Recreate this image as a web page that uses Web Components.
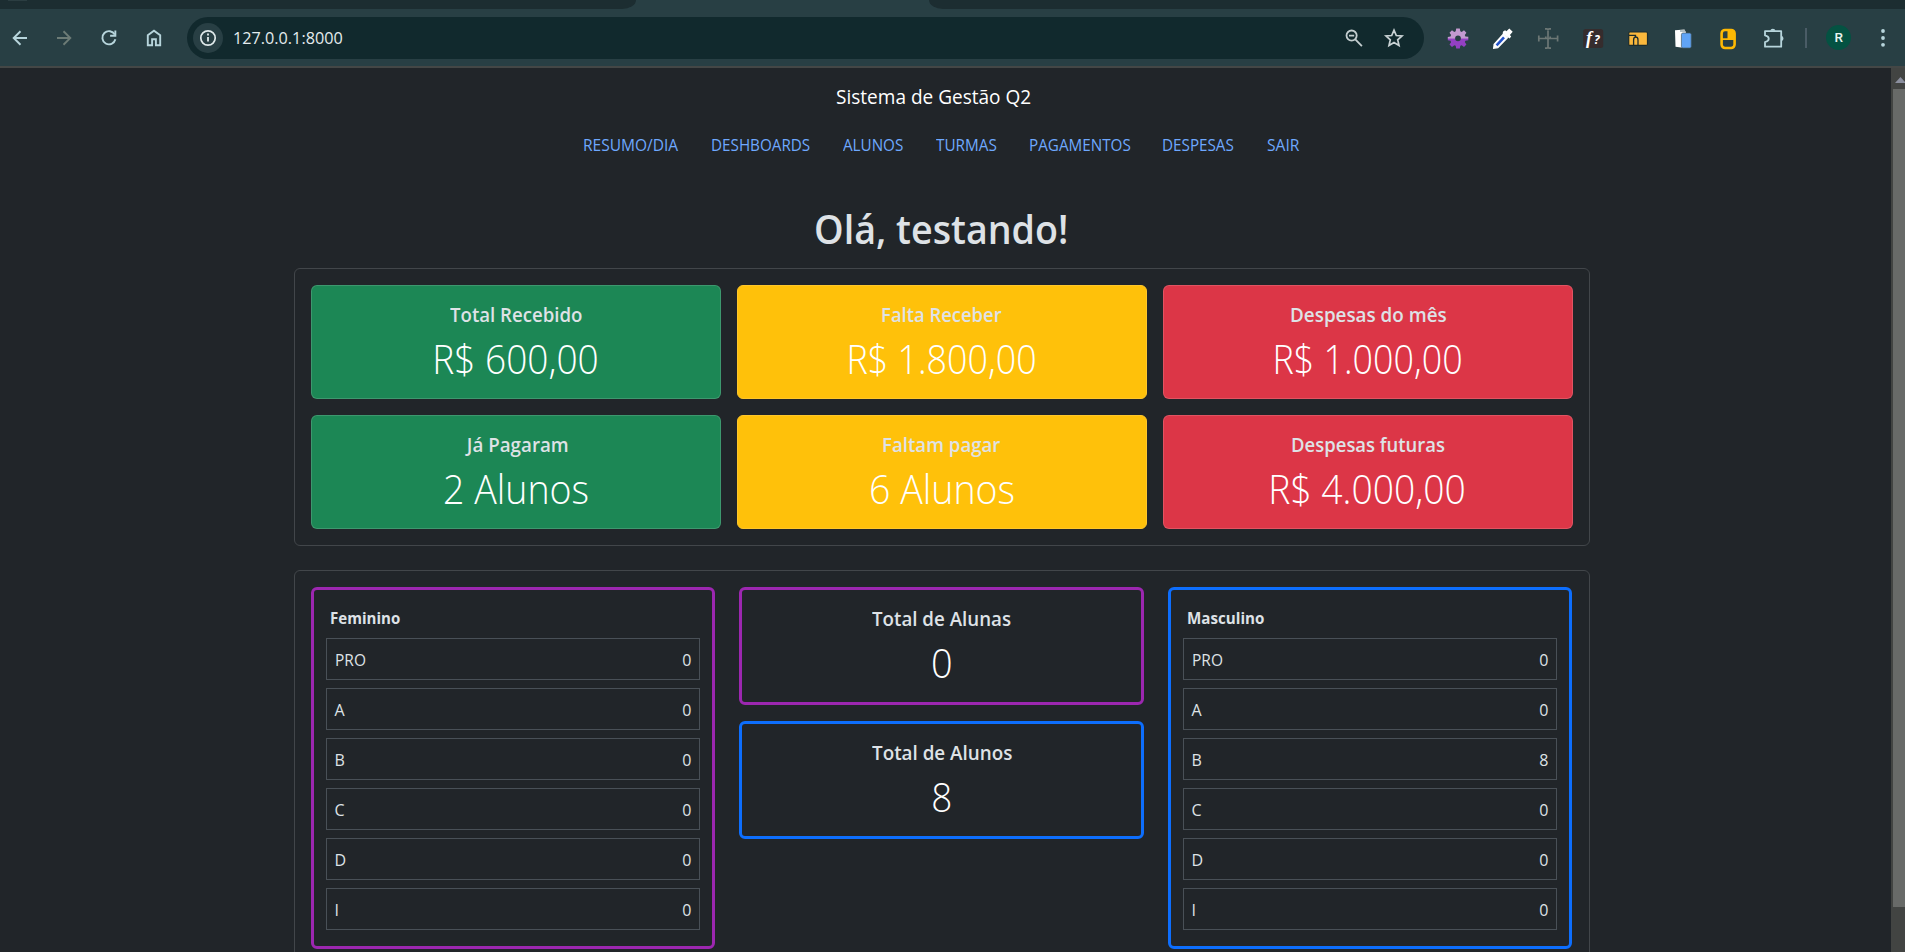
<!DOCTYPE html>
<html lang="pt-BR">
<head>
<meta charset="utf-8">
<title>Sistema de Gestão Q2</title>
<style>
html,body{margin:0;height:100%;overflow:hidden;background:#212529}
body{font-family:"Open Sans","Noto Sans",sans-serif;font-size:16px;line-height:24px;color:#dee2e6}
</style>
</head>
<body>
<app-window></app-window>
<script>
const define = (name, html, setup) => customElements.define(name, class extends HTMLElement {
  connectedCallback() {
    if (this.shadowRoot) return;
    const root = this.attachShadow({mode: 'open'});
    root.innerHTML = typeof html === 'function' ? html(this) : html;
    if (setup) setup(this, root);
  }
});

/* A line of text whose visible glyphs span exactly `w` pixels. */
define('fit-text', el => `<style>
:host{display:inline-block;white-space:nowrap;width:${el.getAttribute('w')}px;vertical-align:top;text-align:left}
span{display:inline-block;transform-origin:0 50%}
</style><span><slot></slot></span>`, (el, root) => {
  const cs = getComputedStyle(el);
  const ctx = document.createElement('canvas').getContext('2d');
  ctx.font = `${cs.fontWeight} ${cs.fontSize} ${cs.fontFamily}`;
  const m = ctx.measureText(el.textContent);
  const ink = m.actualBoundingBoxLeft + m.actualBoundingBoxRight;
  const s = el.getAttribute('w') / ink;
  root.querySelector('span').style.transform = `translateX(${m.actualBoundingBoxLeft * s}px) scaleX(${s})`;
});

define('tab-strip', `<style>
:host{display:flex;justify-content:space-between;height:9px;background:#283f44}
i{display:block;height:9px;background:#1c2d31}
.l{width:636px;border-bottom-right-radius:14px 9px}
.l b{display:block;width:19px;height:1px;margin-left:8px;background:#2b3d41}
.r{width:976px;border-bottom-left-radius:14px 9px}
</style><i class="l"><b></b></i><i class="r"></i>`);

const icons = {
  back: `<path d="M22 15H9M15.5 8.3 8.7 15l6.8 6.7" fill="none" stroke="#b7d5dc" stroke-width="1.9"/>`,
  forward: `<path d="M8 15h13M14.5 8.3 21.3 15l-6.8 6.7" fill="none" stroke="#6c7b76" stroke-width="1.9"/>`,
  reload: `<path d="M20.8 11.6A6.6 6.6 0 1 0 21.4 16.3" fill="none" stroke="#b7d5dc" stroke-width="1.9"/><path d="M22.3 7.5v6.2h-6.2v-1.9h4.3V7.5z" fill="#b7d5dc"/>`,
  home: `<path d="M8.8 22.2V12.3L15 7.7l6.2 4.6v9.9h-4.3v-6h-3.8v6z" fill="none" stroke="#b7d5dc" stroke-width="1.9"/>`,
  info: `<circle cx="15" cy="15" r="7.2" fill="none" stroke="#dfe9ea" stroke-width="1.7"/><path d="M15 14v4.4M15 10.6v1.9" stroke="#dfe9ea" stroke-width="1.8"/>`,
  zoom: `<g fill="none" stroke="#c3cdcf" stroke-width="1.8"><circle cx="12.6" cy="12.6" r="5.1"/><path d="m16.3 16.3 6.6 6.9M10 12.6h5.2"/></g>`,
  star: `<path d="m15 7.2 2.3 5.3 5.7.5-4.3 3.8 1.3 5.6-5-3-5 3 1.3-5.6L7 13l5.7-.5z" fill="none" stroke="#c9d2d4" stroke-width="1.7"/>`,
  gear: `<defs><linearGradient id="g" x2="0" y2="1"><stop offset=".48" stop-color="#c49ad0"/><stop offset=".52" stop-color="#9440c4"/></linearGradient></defs><path fill="url(#g)" fill-rule="evenodd" d="M13.2 5.5h3.6l.5 2.8 1.4.6 2.3-1.7 2.4 2.5-1.6 2.3.6 1.4 2.9.4v3.4l-2.9.5-.6 1.4 1.6 2.4-2.4 2.4-2.3-1.6-1.4.5-.5 2.8h-3.6l-.5-2.8-1.4-.5L9 24l-2.5-2.4 1.6-2.4-.6-1.4-2.7-.5v-3.4l2.7-.4.6-1.4-1.6-2.3L9 7.2l2.3 1.7 1.4-.6zM15 12.4a2.9 2.9 0 1 0 0 5.8 2.9 2.9 0 0 0 0-5.8z"/>`,
  dropper: `<path d="m5.7 25.2.5-4L15.5 11l3.9 3.8L9.8 24.6z" fill="#fff" stroke="#fff" stroke-width="1.3"/><path d="M8.6 22.3 16 14.3" stroke="#2453c9" stroke-width="2.6"/><path d="m15.1 8.6 2-1.4 1.3 1.1 2.9-2.7 3.4 3.2-2.8 3.2 1.3 1.5-1.6 1.9-7-5z" fill="#fff"/>`,
  cross: `<path d="M15 6v19M5.8 15.5h18.8M12 5.8h2l1 1 1-1h2M12 25.2h2l1-1 1 1h2M5.8 12.6v5.8M24.6 12.6v5.8M12.8 15.5v-2M17.2 15.5v-2" fill="none" stroke="#6c7775" stroke-width="1.7"/>`,
  font: `<rect x="5.2" y="6" width="20" height="19" rx="2.5" fill="#352c2d"/><text x="8" y="20.5" font-family="Liberation Serif,serif" font-style="italic" font-weight="700" font-size="18" fill="#fff">f</text><text x="16" y="20.5" font-family="Open Sans,sans-serif" font-style="italic" font-weight="700" font-size="12" fill="#fff">?</text>`,
  folder: `<rect x="5.7" y="9" width="18.8" height="13.4" rx="1.2" fill="#fbb83c" stroke="#1c2c2e" stroke-width="1.2"/><path d="M6 12.4h6.5v1.8M10.6 22.2V17q0-3 2.2-3t2.2 3v5.2" fill="none" stroke="#1c2c2e" stroke-width="1.3"/>`,
  pages: `<path d="M7 7.2 16.5 6.5l1.5 3-3 15.2-7.5-1z" fill="#fff"/><path d="M12 8h5" stroke="#657d84"/><rect x="13.4" y="10" width="9.8" height="15" rx="1.6" fill="#60a4f6" stroke="#445c68" stroke-width=".7"/>`,
  mouse: `<rect x="8.6" y="7" width="13" height="18" rx="3.4" fill="#283f44" stroke="#fdb803" stroke-width="2.6"/><path d="M14.5 7v8.3H8.6V17h13V8l-2-1.4z" fill="#fdb803"/>`,
  puzzle: `<path d="M7 8.2h16.2v15.5H7V19c5-1.3 5-5.4 0-6.6z" fill="none" stroke="#b7d5dc" stroke-width="1.8" stroke-linejoin="round"/><path d="M12.2 7.7a2.7 2.5 0 0 1 5.3 0zM23.5 12.7a2.7 2.8 0 0 1 0 5.4z" fill="#b7d5dc"/>`,
  dots: `<g fill="#b7d5dc"><circle cx="15" cy="8" r="1.9"/><circle cx="15" cy="15" r="1.9"/><circle cx="15" cy="21.8" r="1.9"/></g>`
};
define('ui-icon', el => `<style>
:host{display:flex;justify-content:center;align-items:center;width:45px;height:30px;flex:none}
svg{display:block}
</style><svg width="30" height="30" viewBox="0 0 30 30">${icons[el.getAttribute('name')]}</svg>`);

define('address-bar', `<style>
:host{display:flex;align-items:center;box-sizing:border-box;width:1237px;height:42px;border-radius:21px;background:#11292d;padding:0 10px 0 6px;flex:none}
.site{width:30px;height:30px;border-radius:50%;background:#283f44}
.site ui-icon{width:30px}
.url{flex:1;padding:1px 0 0 11px;font-size:17px;line-height:24px;color:#e4ecee;font-family:"Open Sans",sans-serif}
.act{width:40px}
</style><div class="site"><ui-icon name="info"></ui-icon></div><div class="url"><fit-text w="108">127.0.0.1:8000</fit-text></div><ui-icon class="act" name="zoom"></ui-icon><ui-icon class="act" name="star"></ui-icon>`);

define('browser-toolbar', `<style>
:host{display:flex;align-items:center;height:57px;background:#283f44;border-bottom:2px solid #444746;box-sizing:content-box}
.nav{display:flex;width:187px;flex:none}
.nav ui-icon:first-child{width:39px;margin-right:2.5px}
.ext{display:flex;padding-left:11px}
.sep{width:22px;display:flex;justify-content:center;align-items:center}
.sep i{width:2px;height:20px;background:#4a5c66}
.user{width:46px;display:flex;justify-content:center}
.user b{width:25px;height:25px;border-radius:50%;background:#045242;color:#e8f4f0;font:500 13.5px/25px Roboto,sans-serif;text-align:center}
.menu{width:44px}
</style>
<div class="nav"><ui-icon name="back"></ui-icon><ui-icon name="forward"></ui-icon><ui-icon name="reload"></ui-icon><ui-icon name="home"></ui-icon></div>
<address-bar></address-bar>
<div class="ext">${['gear','dropper','cross','font','folder','pages','mouse','puzzle'].map(n => `<ui-icon name="${n}"></ui-icon>`).join('')}</div>
<div class="sep"><i></i></div><div class="user"><b>R</b></div><ui-icon class="menu" name="dots"></ui-icon>`);

define('scroll-bar', `<style>
:host{display:flex;flex-direction:column;box-sizing:border-box;width:14px;background:#424442;padding:9px 0 0 2px;flex:none;overflow:hidden}
svg{display:block;flex:none;margin-left:2px}
i{display:block;height:818px;margin-top:6px;background:#686a68}
</style><svg width="12" height="6"><path d="M0 6 5.5 0 11 6z" fill="#8b8f9e"/></svg><i></i>`);

const menu = [['RESUMO/DIA',95],['DESHBOARDS',98.4],['ALUNOS',60.5],['TURMAS',61],['PAGAMENTOS',101],['DESPESAS',71],['SAIR',32.5]];
define('site-header', `<style>
:host{display:block;padding-top:14px}
.brand{font-size:20px;line-height:30px;color:#fff;padding-left:837px;margin-bottom:21px}
nav{display:flex;gap:32.7px;padding-left:584px;color:#6ea8fe}
h1{margin:48px 0 15px;padding-left:816px;font-size:40px;line-height:48px;font-weight:600;color:#dee2e6}
</style><div class="brand"><fit-text w="193.7">Sistema de Gestão Q2</fit-text></div>
<nav>${menu.map(([t,w]) => `<fit-text w="${w}">${t}</fit-text>`).join('')}</nav>
<h1><fit-text w="250.5">Olá, testando!</fit-text></h1>`);

define('panel-box', `<style>
:host{display:grid;box-sizing:border-box;width:1296px;margin-left:294px;margin-bottom:24px;padding:16px;border:1px solid #42464a;border-radius:6px;gap:16px}
:host([kind=money]){grid-template-columns:repeat(3,410px)}
:host([kind=students]){grid-template-columns:404px 405px 404px;gap:24px;align-items:start;padding-bottom:32px}
</style><slot></slot>`);

define('metric-card', el => `<style>
:host{display:block;box-sizing:border-box;padding:17px 16px 15px;border:1px solid rgba(255,255,255,.15);border-radius:6px;text-align:center}
:host([tone=success]){background:#1c8755}
:host([tone=warning]){background:#ffc10a;border-color:#ffc72a}
:host([tone=danger]){background:#dc3647}
:host([tone=purple]){border:3px solid #9c27b0}
:host([tone=blue]){border:3px solid #0d6efd}
.t{font-size:20px;line-height:24px;font-weight:600;color:#dee2e6;margin-bottom:8px}
.v{font-size:40px;line-height:48px;font-weight:300;color:#fff}
</style><div class="t"><fit-text w="${el.getAttribute('tw')}">${el.getAttribute('label')}</fit-text></div><div class="v"><fit-text w="${el.getAttribute('vw')}">${el.getAttribute('value')}</fit-text></div>`);

define('stack-column', `<style>:host{display:flex;flex-direction:column;gap:16px}</style><slot></slot>`);

define('level-list', el => `<style>
:host{display:flex;flex-direction:column;gap:8px;box-sizing:border-box;padding:16px 12px;border:3px solid ${el.getAttribute('color')};border-radius:6px}
.t{font-weight:700;padding-left:4.5px;color:#dee2e6}
.row{display:flex;justify-content:space-between;border:1px solid #495057;padding:9px 7.5px 7px 7.5px}
</style><div class="t"><fit-text w="${el.getAttribute('tw')}">${el.getAttribute('label')}</fit-text></div>
${el.getAttribute('values').split(',').map((v, i) => `<div class="row"><span>${i ? 'ABCDI'[i-1] : '<fit-text w="29.5" style="margin-left:1px">PRO</fit-text>'}</span><span>${v}</span></div>`).join('')}`);

define('dashboard-page', `<style>:host{display:block;flex:1;overflow:hidden;background:#212529}</style>
<site-header></site-header>
<panel-box kind="money">
<metric-card tone="success" label="Total Recebido" tw="132.3" value="R$ 600,00" vw="161"></metric-card>
<metric-card tone="warning" label="Falta Receber" tw="120" value="R$ 1.800,00" vw="185"></metric-card>
<metric-card tone="danger" label="Despesas do mês" tw="155" value="R$ 1.000,00" vw="185"></metric-card>
<metric-card tone="success" label="Já Pagaram" tw="102.7" value="2 Alunos" vw="142.5"></metric-card>
<metric-card tone="warning" label="Faltam pagar" tw="117.7" value="6 Alunos" vw="142.5"></metric-card>
<metric-card tone="danger" label="Despesas futuras" tw="152.3" value="R$ 4.000,00" vw="192"></metric-card>
</panel-box>
<panel-box kind="students">
<level-list color="#9c27b0" label="Feminino" tw="69.3" values="0,0,0,0,0,0"></level-list>
<stack-column>
<metric-card tone="purple" label="Total de Alunas" tw="138.3" value="0" vw="18"></metric-card>
<metric-card tone="blue" label="Total de Alunos" tw="139.7" value="8" vw="17.5"></metric-card>
</stack-column>
<level-list color="#0d6efd" label="Masculino" tw="76.5" values="0,0,8,0,0,0"></level-list>
</panel-box>`);

define('app-window', `<style>
:host{display:flex;flex-direction:column;width:1905px;height:952px;overflow:hidden}
main{display:flex;flex:1;min-height:0}
</style><tab-strip></tab-strip><browser-toolbar></browser-toolbar><main><dashboard-page></dashboard-page><scroll-bar></scroll-bar></main>`);
</script>
</body>
</html>
